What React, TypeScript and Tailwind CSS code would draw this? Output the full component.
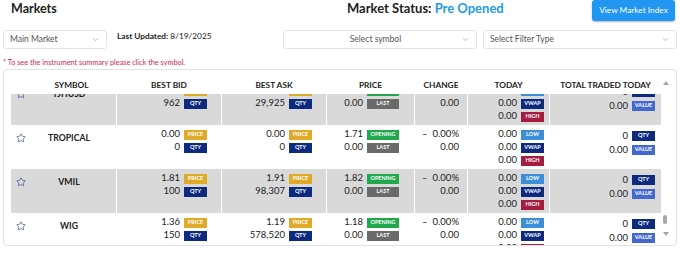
import React from 'react'
import { ChevronDown, Star } from 'lucide-react'

type Line = { v: string; b?: string; c?: string }
type Row = {
  symbol: string
  gray: boolean
  bid: Line[]
  ask: Line[]
  price: Line[]
  change: string[]
  today: Line[]
  total: Line[]
}

const PRICE = 'bg-[#e1a928]'
const QTY = 'bg-[#0c2a7e]'
const LAST = 'bg-[#6a6a6a]'
const OPEN = 'bg-[#21a84c]'
const LOW = 'bg-[#3c8ed6]'
const VWAP = 'bg-[#0c2a7e]'
const HIGH = 'bg-[#a41c40]'
const VALUE = 'bg-[#4269d0]'

const rows: Row[] = [
  {
    symbol: 'TJHUSD',
    gray: true,
    bid: [{ v: '0.00', b: 'PRICE', c: PRICE }, { v: '962', b: 'QTY', c: QTY }],
    ask: [{ v: '0.00', b: 'PRICE', c: PRICE }, { v: '29,925', b: 'QTY', c: QTY }],
    price: [{ v: '0.00', b: 'OPENING', c: OPEN }, { v: '0.00', b: 'LAST', c: LAST }],
    change: ['0.00%', '0.00'],
    today: [{ v: '0.00', b: 'LOW', c: LOW }, { v: '0.00', b: 'VWAP', c: VWAP }, { v: '0.00', b: 'HIGH', c: HIGH }],
    total: [{ v: '0', b: 'QTY', c: QTY }, { v: '0.00', b: 'VALUE', c: VALUE }],
  },
  {
    symbol: 'TROPICAL',
    gray: false,
    bid: [{ v: '0.00', b: 'PRICE', c: PRICE }, { v: '0', b: 'QTY', c: QTY }],
    ask: [{ v: '0.00', b: 'PRICE', c: PRICE }, { v: '0', b: 'QTY', c: QTY }],
    price: [{ v: '1.71', b: 'OPENING', c: OPEN }, { v: '0.00', b: 'LAST', c: LAST }],
    change: ['0.00%', '0.00'],
    today: [{ v: '0.00', b: 'LOW', c: LOW }, { v: '0.00', b: 'VWAP', c: VWAP }, { v: '0.00', b: 'HIGH', c: HIGH }],
    total: [{ v: '0', b: 'QTY', c: QTY }, { v: '0.00', b: 'VALUE', c: VALUE }],
  },
  {
    symbol: 'VMIL',
    gray: true,
    bid: [{ v: '1.81', b: 'PRICE', c: PRICE }, { v: '100', b: 'QTY', c: QTY }],
    ask: [{ v: '1.91', b: 'PRICE', c: PRICE }, { v: '98,307', b: 'QTY', c: QTY }],
    price: [{ v: '1.82', b: 'OPENING', c: OPEN }, { v: '0.00', b: 'LAST', c: LAST }],
    change: ['0.00%', '0.00'],
    today: [{ v: '0.00', b: 'LOW', c: LOW }, { v: '0.00', b: 'VWAP', c: VWAP }, { v: '0.00', b: 'HIGH', c: HIGH }],
    total: [{ v: '0', b: 'QTY', c: QTY }, { v: '0.00', b: 'VALUE', c: VALUE }],
  },
  {
    symbol: 'WIG',
    gray: false,
    bid: [{ v: '1.36', b: 'PRICE', c: PRICE }, { v: '150', b: 'QTY', c: QTY }],
    ask: [{ v: '1.19', b: 'PRICE', c: PRICE }, { v: '578,520', b: 'QTY', c: QTY }],
    price: [{ v: '1.18', b: 'OPENING', c: OPEN }, { v: '0.00', b: 'LAST', c: LAST }],
    change: ['0.00%', '0.00'],
    today: [{ v: '0.00', b: 'LOW', c: LOW }, { v: '0.00', b: 'VWAP', c: VWAP }, { v: '0.00', b: 'HIGH', c: HIGH }],
    total: [{ v: '0', b: 'QTY', c: QTY }, { v: '0.00', b: 'VALUE', c: VALUE }],
  },
]

const cols = 'grid grid-cols-[105px_104px_104px_87px_52px_81px_111px] gap-x-[1px]'

function Select({ label, w, center }: { label: string; w: string; center?: boolean }) {
  return (
    <div className={`${w} h-[19px] border border-[#e3e3e3] rounded-[3px] flex items-center pl-[6px] pr-[6px] text-[8.5px] text-[#555]`}>
      <span className={center ? 'flex-1 text-center' : 'flex-1'}>{label}</span>
      <ChevronDown size={9} color="#8a8a8a" strokeWidth={1.5} />
    </div>
  )
}

function Lines({ lines, badgeW, pr, lh, pt }: { lines: Line[]; badgeW: string; pr: string; lh: string; pt: string }) {
  return (
    <div className={`flex flex-col items-end ${pr} ${pt}`}>
      {lines.map((l, i) => (
        <div key={i} className={`${lh} flex items-center gap-[4px]`}>
          <span>{l.v}</span>
          <span className={`${badgeW} h-[10px] ${l.c} text-white text-[5.5px] font-bold leading-none flex items-center justify-center`}>
            {l.b}
          </span>
        </div>
      ))}
    </div>
  )
}

function App() {
  return (
    <div className="w-[680px] h-[254px] bg-white overflow-hidden text-[#222]" style={{ fontFamily: 'Lato, "Open Sans", sans-serif' }}>
      <div className="h-[21px] flex items-start">
        <div className="w-[347px] pl-[11px] text-[12.5px] font-bold text-[#222] leading-[18px]">Markets</div>
        <div className="text-[13px] font-bold leading-[17px]">
          Market Status: <span className="text-[#1e9be8]">Pre Opened</span>
        </div>
        <button className="ml-auto mr-[5px] w-[83px] h-[21px] rounded-[3px] bg-[#2196f3] text-white text-[8.3px] shadow-[0_1px_2px_rgba(0,0,0,0.3)]">
          View Market Index
        </button>
      </div>

      <div className="mt-[9px] flex items-start pl-[3px] pr-[3px]">
        <Select label="Main Market" w="w-[104px]" />
        <div className="ml-[10px] text-[8.3px] leading-[12px]">
          <span className="font-bold">Last Updated:</span> 8/19/2025
        </div>
        <div className="ml-auto flex gap-[6px]">
          <Select label="Select symbol" w="w-[194px]" center />
          <Select label="Select Filter Type" w="w-[194px]" />
        </div>
      </div>

      <div className="mt-[9px] pl-[3px] h-[10px] text-[7.3px] leading-[10px] text-[#d0245c]">
        * To see the instrument summary please click the symbol.
      </div>

      <div className="mt-[1px] mx-[3px] h-[177px] border border-[#e2e2e2] rounded-[4px] flex overflow-hidden">
        <div className="pl-[7px] w-[657px] flex flex-col">
          <div className={`${cols} h-[24px] shrink-0 pt-[9px] text-[8.3px] font-bold leading-[12px] text-center`}>
            <div className="pl-[16px]">SYMBOL</div>
            <div>BEST BID</div>
            <div>BEST ASK</div>
            <div>PRICE</div>
            <div>CHANGE</div>
            <div>TODAY</div>
            <div>TOTAL TRADED TODAY</div>
          </div>
          <div className="flex-1 overflow-hidden">
            <div className="-mt-[13px] text-[9.5px]">
              {rows.map((r) => {
                const bg = r.gray ? 'bg-[#d9d9d9]' : 'bg-white'
                return (
                  <div key={r.symbol} className={`${cols} h-[44px]`}>
                    <div className={`${bg} flex items-start pt-[8px] pl-[5px]`}>
                      <Star size={10} color="#34448a" strokeWidth={1.6} />
                      <div className="flex-1 text-center font-bold text-[8.7px] leading-[12px] -mt-[1px] pr-[4px]">{r.symbol}</div>
                    </div>
                    <div className={bg}>
                      <Lines lines={r.bid} badgeW="w-[23px]" pr="pr-[14px]" lh="h-[13px]" pt="pt-[3px]" />
                    </div>
                    <div className={bg}>
                      <Lines lines={r.ask} badgeW="w-[23px]" pr="pr-[14px]" lh="h-[13px]" pt="pt-[3px]" />
                    </div>
                    <div className={bg}>
                      <Lines lines={r.price} badgeW="w-[32px]" pr="pr-[15px]" lh="h-[13px]" pt="pt-[3px]" />
                    </div>
                    <div className={`${bg} flex flex-col items-end pr-[8px] pt-[3px]`}>
                      <div className="h-[13px] flex items-center gap-[5px]">
                        <span>–</span>
                        <span>{r.change[0]}</span>
                      </div>
                      <div className="h-[13px] flex items-center">{r.change[1]}</div>
                    </div>
                    <div className={bg}>
                      <Lines lines={r.today} badgeW="w-[23px]" pr="pr-[5px]" lh="h-[13px]" pt="pt-[3px]" />
                    </div>
                    <div className={bg}>
                      <Lines lines={r.total} badgeW="w-[23px]" pr="pr-[6px]" lh="h-[14px]" pt="pt-[4px]" />
                    </div>
                  </div>
                )
              })}
            </div>
          </div>
        </div>
        <div className="w-[10px] flex flex-col items-center">
          <svg width="6" height="4" viewBox="0 0 6 4" className="mt-[11px]">
            <path d="M3 0 L6 4 L0 4 Z" fill="#a3a3a3" />
          </svg>
          <div className="flex-1" />
          <div className="w-[4px] h-[9px] rounded-full bg-[#a8a8a8] -ml-[2px]" />
          <svg width="6" height="4" viewBox="0 0 6 4" className="mt-[8px] mb-[9px]">
            <path d="M0 0 L6 0 L3 4 Z" fill="#a3a3a3" />
          </svg>
        </div>
      </div>
    </div>
  )
}

export default App
